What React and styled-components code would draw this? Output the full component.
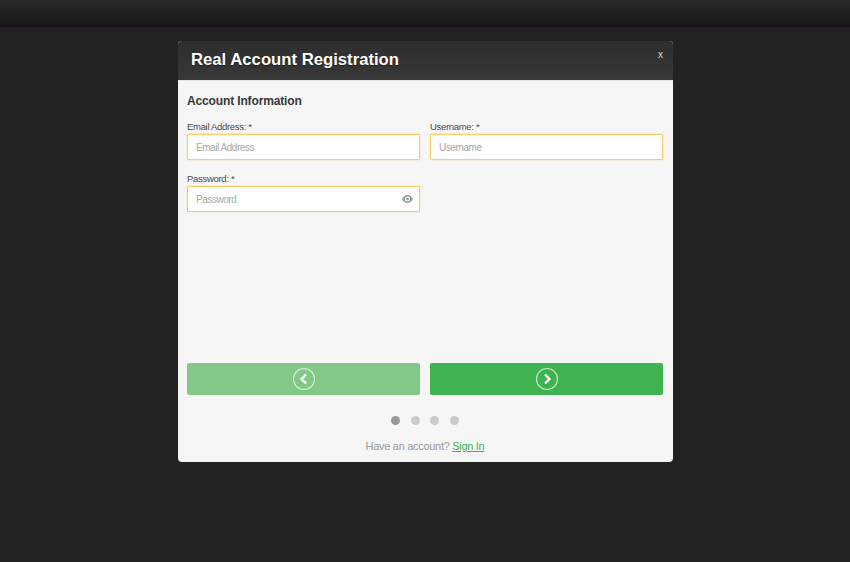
import styled, { createGlobalStyle } from "styled-components";

const GlobalStyle = createGlobalStyle`
  html, body {
    margin: 0;
    padding: 0;
    height: 100%;
    background: #222222;
    font-family: "Liberation Sans", Arial, sans-serif;
  }
`;

const Page = styled.div`
  width: 100%;
  height: 562px;
  overflow: hidden;
  background: #222222;
`;

const TopBar = styled.div`
  height: 27px;
  background: linear-gradient(#292929, #161616);
  border-bottom: 2px solid #321234;
`;

const Modal = styled.div`
  width: 495px;
  height: 421px;
  margin: 12px 0 0 178px;
  display: flex;
  flex-direction: column;
  border-radius: 4px;
  overflow: hidden;
  background: #f6f6f6;
`;

const ModalHeader = styled.div`
  height: 40px;
  flex: none;
  display: flex;
  align-items: flex-start;
  justify-content: space-between;
  padding: 0 10px 0 13px;
  background: linear-gradient(#2e2e2e, #383838);
  border-bottom: 1px solid #e4e4e4;
  box-sizing: border-box;
`;

const Title = styled.h1`
  margin: 0;
  font-size: 16.7px;
  font-weight: bold;
  color: #fff;
  line-height: 38px;
  text-shadow: 0 1px 1px rgba(0, 0, 0, 0.5);
`;

const Close = styled.span`
  margin-top: 8px;
  font-size: 10px;
  line-height: 12px;
  color: #dcdcdc;
`;

const Body = styled.div`
  flex: 1;
  display: flex;
  flex-direction: column;
  padding: 0 10px 0 9px;
`;

const SectionTitle = styled.h2`
  margin: 13px 0 0;
  font-size: 12px;
  letter-spacing: -0.14px;
  line-height: 15px;
  font-weight: bold;
  color: #383838;
`;

const FormGrid = styled.div`
  display: grid;
  grid-template-columns: 233px 233px;
  column-gap: 10px;
  row-gap: 13px;
  margin-top: 12px;
`;

const Field = styled.div`
  display: flex;
  flex-direction: column;
`;

const Label = styled.label`
  font-size: 9.5px;
  letter-spacing: -0.31px;
  line-height: 11px;
  height: 13px;
  color: #4a4a4a;
`;

const InputWrap = styled.div`
  position: relative;
  display: flex;
`;

const Input = styled.input`
  width: 100%;
  height: 26px;
  box-sizing: border-box;
  padding: 0 8px;
  border: 1px solid #f6cd66;
  border-radius: 1px;
  background: #fff;
  box-shadow: 0 0 2px #f8dc96;
  outline: none;
  font-family: inherit;
  font-size: 10px;
  letter-spacing: -0.45px;
  &::placeholder {
    color: #a8a8a8;
    opacity: 1;
  }
`;

const EyeButton = styled.span`
  position: absolute;
  right: 7px;
  top: 9px;
  display: flex;
`;

const Spacer = styled.div`
  flex: 1;
`;

const NavRow = styled.div`
  display: grid;
  grid-template-columns: 233px 233px;
  column-gap: 10px;
`;

const NavButton = styled.button`
  height: 32px;
  padding: 0;
  border: none;
  border-radius: 2px;
  display: flex;
  align-items: center;
  justify-content: center;
  background: ${(props) => (props.$faded ? "#82c886" : "#3fb34f")};
`;

const Dots = styled.div`
  display: flex;
  justify-content: center;
  gap: 10.5px;
  margin-top: 21px;
`;

const Dot = styled.span`
  width: 9px;
  height: 9px;
  border-radius: 50%;
  background: ${(props) => (props.$active ? "#9a9a9a" : "#cacaca")};
`;

const Footer = styled.p`
  margin: 14px 0 9px;
  text-align: center;
  font-size: 11px;
  letter-spacing: -0.3px;
  line-height: 14px;
  color: #9a9a9a;
`;

const SignIn = styled.a`
  color: #3fb34f;
  text-decoration: underline;
`;

function ArrowIcon({ back }) {
  return (
    <svg width="24" height="24" viewBox="0 0 24 24" fill="none">
      <circle cx="12" cy="12" r="10.5" stroke="#fff" strokeOpacity="0.7" strokeWidth="1.2" />
      <path
        d={back ? "M14 7.5 L9.5 12 L14 16.5" : "M10 7.5 L14.5 12 L10 16.5"}
        stroke="#fff"
        strokeWidth="2.4"
      />
    </svg>
  );
}

function EyeIcon() {
  return (
    <svg width="11" height="8" viewBox="0 0 11 8">
      <path
        fillRule="evenodd"
        fill="#939c9c"
        d="M5.5 0C8 0 10 1.8 11 4C10 6.2 8 8 5.5 8C3 8 1 6.2 0 4C1 1.8 3 0 5.5 0ZM5.5 1.4A2.6 2.6 0 1 0 5.5 6.6A2.6 2.6 0 1 0 5.5 1.4Z"
      />
      <circle cx="5.5" cy="4" r="1.4" fill="#939c9c" />
    </svg>
  );
}

export default function App() {
  return (
    <Page>
      <GlobalStyle />
      <TopBar />
      <Modal>
        <ModalHeader>
          <Title>Real Account Registration</Title>
          <Close>x</Close>
        </ModalHeader>
        <Body>
          <SectionTitle>Account Information</SectionTitle>
          <FormGrid>
            <Field>
              <Label>Email Address: *</Label>
              <InputWrap>
                <Input placeholder="Email Address" />
              </InputWrap>
            </Field>
            <Field>
              <Label>Username: *</Label>
              <InputWrap>
                <Input placeholder="Username" />
              </InputWrap>
            </Field>
            <Field>
              <Label>Password: *</Label>
              <InputWrap>
                <Input placeholder="Password" />
                <EyeButton>
                  <EyeIcon />
                </EyeButton>
              </InputWrap>
            </Field>
          </FormGrid>
          <Spacer />
          <NavRow>
            <NavButton $faded>
              <ArrowIcon back />
            </NavButton>
            <NavButton>
              <ArrowIcon />
            </NavButton>
          </NavRow>
          <Dots>
            <Dot $active />
            <Dot />
            <Dot />
            <Dot />
          </Dots>
          <Footer>
            Have an account? <SignIn href="#">Sign In</SignIn>
          </Footer>
        </Body>
      </Modal>
    </Page>
  );
}
